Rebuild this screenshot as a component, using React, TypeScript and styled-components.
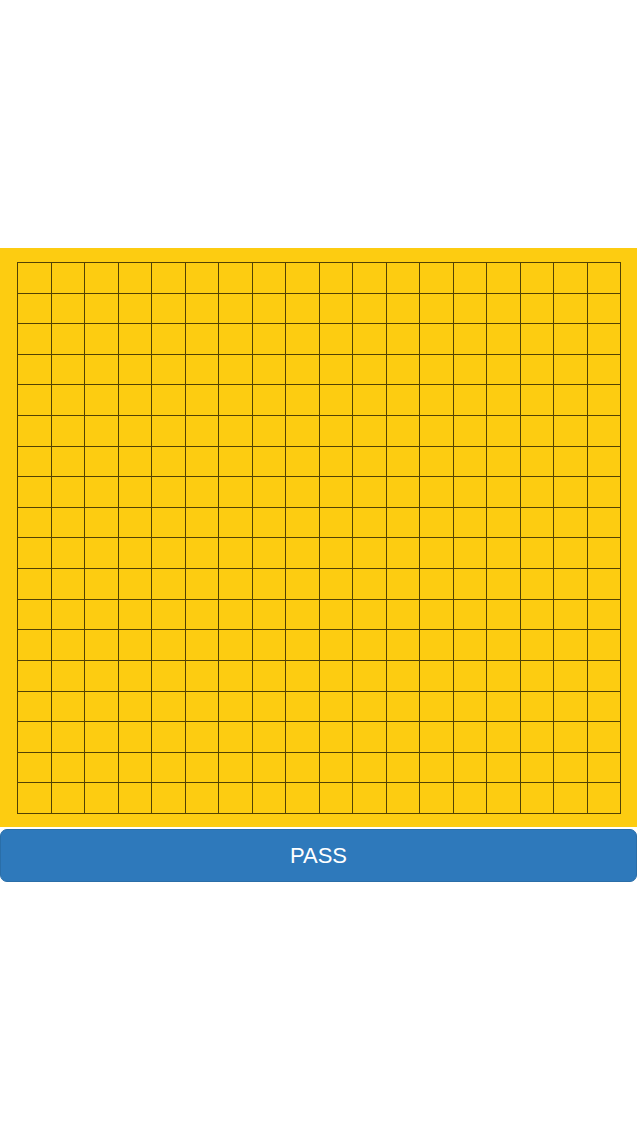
import React from "react";
import styled, { createGlobalStyle } from "styled-components";

const Global = createGlobalStyle`
  html, body { margin: 0; padding: 0; background: #ffffff; }
  body { font-family: "Liberation Sans", Arial, sans-serif; }
`;

const Page = styled.div`
  width: 640px;
  padding-top: 248px;
  display: flex;
  flex-direction: column;
  align-items: flex-start;
`;

const Board = styled.div`
  width: 637px;
  box-sizing: border-box;
  padding: 14px 17px 13px 17px;
  background: #fdcc11;
`;

const Grid = styled.div<{ $n: number }>`
  width: 604px;
  height: 552px;
  box-sizing: border-box;
  display: grid;
  grid-template-columns: repeat(${(p) => p.$n}, 1fr);
  grid-template-rows: repeat(${(p) => p.$n}, 1fr);
  border-top: 1px solid rgba(40, 30, 0, 0.8);
  border-left: 1px solid rgba(40, 30, 0, 0.8);
`;

const Cell = styled.div`
  border-right: 1px solid rgba(40, 30, 0, 0.8);
  border-bottom: 1px solid rgba(40, 30, 0, 0.8);
`;

const PassButton = styled.button`
  margin-top: 2px;
  width: 637px;
  height: 53px;
  border: 1px solid #2a6ea8;
  border-radius: 7px;
  background: #2e79bb;
  color: #ffffff;
  font-family: "Liberation Sans", Arial, sans-serif;
  font-size: 22px;
  display: flex;
  align-items: center;
  justify-content: center;
  padding: 0;
`;

export default function App() {
  const n = 18;
  const cells = Array.from({ length: n * n }, (_, i) => <Cell key={i} />);
  return (
    <>
      <Global />
      <Page>
        <Board>
          <Grid $n={n}>{cells}</Grid>
        </Board>
        <PassButton>PASS</PassButton>
      </Page>
    </>
  );
}
